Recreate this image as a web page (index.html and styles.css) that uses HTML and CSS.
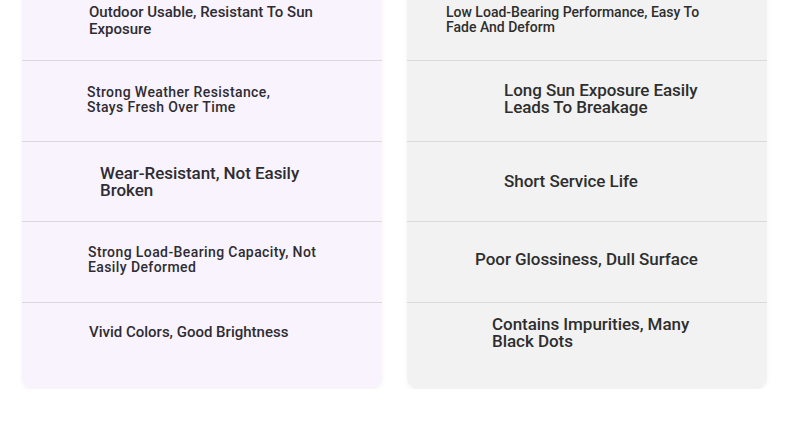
FILE: index.html
```html
<!DOCTYPE html>
<html>
<head>
<meta charset="utf-8">
<link rel="stylesheet" href="styles.css">
</head>
<body>
<div class="compare">
  <div class="card pros">
    <div class="row"><div class="txt s15 l1">Outdoor Usable, Resistant To Sun Exposure</div></div>
    <div class="row"><div class="txt s14w l2">Strong Weather Resistance, Stays Fresh Over Time</div></div>
    <div class="row short"><div class="txt s17 l3">Wear-Resistant, Not Easily Broken</div></div>
    <div class="row"><div class="txt s14w l4">Strong Load-Bearing Capacity, Not Easily Deformed</div></div>
    <div class="row last"><div class="txt s15 l5">Vivid Colors, Good Brightness</div></div>
  </div>
  <div class="card cons">
    <div class="row"><div class="txt s14 r1">Low Load-Bearing Performance, Easy To Fade And Deform</div></div>
    <div class="row"><div class="txt s17 r2">Long Sun Exposure Easily Leads To Breakage</div></div>
    <div class="row short"><div class="txt s17 r3">Short Service Life</div></div>
    <div class="row"><div class="txt s17 r4">Poor Glossiness, Dull Surface</div></div>
    <div class="row last"><div class="txt s17 r5">Contains Impurities, Many Black Dots</div></div>
  </div>
</div>
</body>
</html>
```
FILE: styles.css
```css
* { box-sizing: border-box; }
html, body { margin: 0; padding: 0; background: #ffffff; }
body { font-family: Roboto, "Noto Sans", sans-serif; overflow: hidden; }

.compare {
  display: flex;
  gap: 25px;
  padding-left: 22px;
  margin-top: -20px;
}

.card {
  width: 360px;
  border-radius: 12px;
  padding-bottom: 26px;
  box-shadow: 0 2px 4px rgba(120, 100, 140, 0.08);
}
.pros { background: #f8f3fc; }
.cons { background: #f2f2f2; }

.row {
  height: 81px;
  display: flex;
  align-items: center;
  border-bottom: 1px solid #dcd8de;
}
.row.short { height: 80px; }
.cons .row { border-bottom-color: #dadada; }
.row.last { height: 60px; border-bottom: none; }

.txt {
  color: #2f2c33;
  font-weight: 500;
}
.cons .txt { color: #2e2e2e; }

.s14 { font-size: 14px; line-height: 15px; letter-spacing: 0px; }
.s14w { font-size: 14px; line-height: 15px; letter-spacing: 0.4px; }
.s15 { font-size: 15px; line-height: 17px; }
.s17 { font-size: 17px; line-height: 17px; letter-spacing: -0.05px; }

.l1 { margin-left: 67px; width: 240px; margin-top: 2px; }
.l2 { margin-left: 65px; width: 210px; margin-top: -2px; }
.l3 { margin-left: 78px; width: 215px; }
.l4 { margin-left: 66px; width: 245px; margin-top: -5px; }
.l5 { margin-left: 67px; width: 240px; margin-top: -2px; }

.r1 { margin-left: 39px; width: 270px; margin-top: 0px; }
.r2 { margin-left: 97px; width: 205px; margin-top: -4px; }
.r3 { margin-left: 97px; width: 205px; }
.r4 { margin-left: 68px; width: 240px; margin-top: -6px; }
.r5 { margin-left: 85px; width: 215px; margin-top: -1px; }
```
